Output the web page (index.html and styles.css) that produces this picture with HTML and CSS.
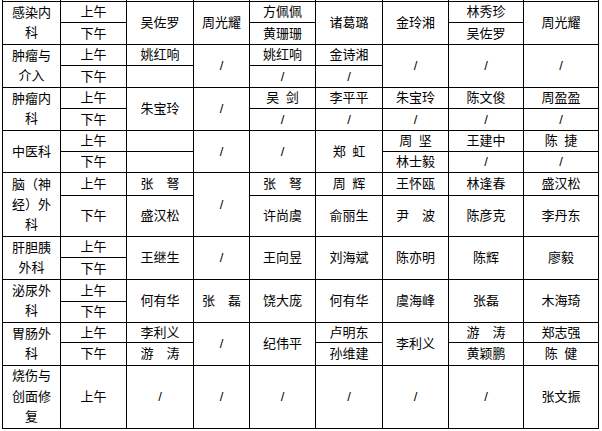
FILE: index.html
```html
<!DOCTYPE html>
<html lang="zh">
<head>
<meta charset="utf-8">
<title>门诊排班表</title>
<link rel="stylesheet" href="styles.css">
</head>
<body>
<table class="roster">
<colgroup>
<col class="c-dept"><col class="c-period"><col class="c-a"><col class="c-b"><col class="c-c"><col class="c-d"><col class="c-e"><col class="c-f"><col class="c-g">
</colgroup>
<tbody>
<tr class="stub"><td></td><td></td><td></td><td></td><td></td><td></td><td></td><td></td><td></td></tr>

<tr class="h21"><td rowspan="2" class="dept">感染内科</td><td>上午</td><td rowspan="2">吴佐罗</td><td rowspan="2">周光耀</td><td>方佩佩</td><td rowspan="2">诸葛璐</td><td rowspan="2">金玲湘</td><td>林秀珍</td><td rowspan="2">周光耀</td></tr>
<tr class="h22"><td>下午</td><td>黄珊珊</td><td>吴佐罗</td></tr>

<tr class="h21"><td rowspan="2" class="dept">肿瘤与介入</td><td>上午</td><td>姚红响</td><td rowspan="2">/</td><td>姚红响</td><td>金诗湘</td><td rowspan="2">/</td><td rowspan="2">/</td><td rowspan="2">/</td></tr>
<tr class="h22"><td>下午</td><td></td><td>/</td><td>/</td></tr>

<tr class="h21"><td rowspan="2" class="dept">肿瘤内科</td><td>上午</td><td rowspan="2">朱宝玲</td><td rowspan="2">/</td><td>吴 剑</td><td>李平平</td><td>朱宝玲</td><td>陈文俊</td><td>周盈盈</td></tr>
<tr class="h22"><td>下午</td><td>/</td><td>/</td><td>/</td><td>/</td><td>/</td></tr>

<tr class="h21"><td rowspan="2" class="dept">中医科</td><td>上午</td><td></td><td rowspan="2">/</td><td rowspan="2">/</td><td rowspan="2">郑 虹</td><td>周 坚</td><td>王建中</td><td>陈 捷</td></tr>
<tr class="h21"><td>下午</td><td></td><td>林士毅</td><td>/</td><td>/</td></tr>

<tr class="h23"><td rowspan="2" class="dept">脑（神经）外科</td><td>上午</td><td>张  弩</td><td rowspan="2">/</td><td>张  弩</td><td>周 辉</td><td>王怀瓯</td><td>林逢春</td><td>盛汉松</td></tr>
<tr class="h41"><td>下午</td><td>盛汉松</td><td>许尚虞</td><td>俞丽生</td><td>尹  波</td><td>陈彦克</td><td>李丹东</td></tr>

<tr class="h21"><td rowspan="2" class="dept">肝胆胰外科</td><td>上午</td><td rowspan="2">王继生</td><td rowspan="2">/</td><td rowspan="2">王向昱</td><td rowspan="2">刘海斌</td><td rowspan="2">陈亦明</td><td rowspan="2">陈辉</td><td rowspan="2">廖毅</td></tr>
<tr class="h22"><td>下午</td></tr>

<tr class="h22"><td rowspan="2" class="dept">泌尿外科</td><td>上午</td><td rowspan="2">何有华</td><td rowspan="2">张  磊</td><td rowspan="2">饶大庞</td><td rowspan="2">何有华</td><td rowspan="2">虞海峰</td><td rowspan="2">张磊</td><td rowspan="2">木海琦</td></tr>
<tr class="h21"><td>下午</td></tr>

<tr class="h20"><td rowspan="2" class="dept">胃肠外科</td><td>上午</td><td>李利义</td><td rowspan="2">/</td><td rowspan="2">纪伟平</td><td>卢明东</td><td rowspan="2">李利义</td><td>游  涛</td><td>郑志强</td></tr>
<tr class="h23"><td>下午</td><td>游  涛</td><td>孙维建</td><td>黄颖鹏</td><td>陈 健</td></tr>

<tr class="h62"><td class="dept dept-tall">烧伤与创面修复</td><td>上午</td><td>/</td><td>/</td><td>/</td><td>/</td><td>/</td><td>/</td><td>张文振</td></tr>
</tbody>
</table>
</body>
</html>
```

FILE: styles.css
```css
html, body {
  margin: 0;
  padding: 0;
  background: #ffffff;
}

.roster {
  border-collapse: collapse;
  table-layout: fixed;
  width: 597px;
  margin-left: 2px;
  font-family: "Liberation Sans", "Noto Sans CJK SC", sans-serif;
  font-size: 13px;
  color: #000000;
}

.c-dept { width: 58px; }
.c-period { width: 66px; }
.c-a { width: 67px; }
.c-b { width: 56px; }
.c-c { width: 66px; }
.c-d { width: 67px; }
.c-e { width: 66px; }
.c-f { width: 75px; }
.c-g { width: 75px; }

.roster td {
  border: 1px solid #000000;
  padding: 0 4px;
  text-align: center;
  vertical-align: middle;
  line-height: 18px;
  white-space: pre-wrap;
  word-spacing: 3px;
  overflow: hidden;
}

.roster td.dept {
  line-height: 20px;
  padding: 0 5px;
}

.roster td.dept-tall {
  line-height: 20.6px;
}

.roster tr.stub td {
  border-top: none;
  height: 1px;
  padding: 0;
  line-height: 0;
}

.h20 { height: 20px; }
.h21 { height: 21px; }
.h22 { height: 22px; }
.h23 { height: 23px; }
.h41 { height: 41px; }
.h62 { height: 62px; }
```
